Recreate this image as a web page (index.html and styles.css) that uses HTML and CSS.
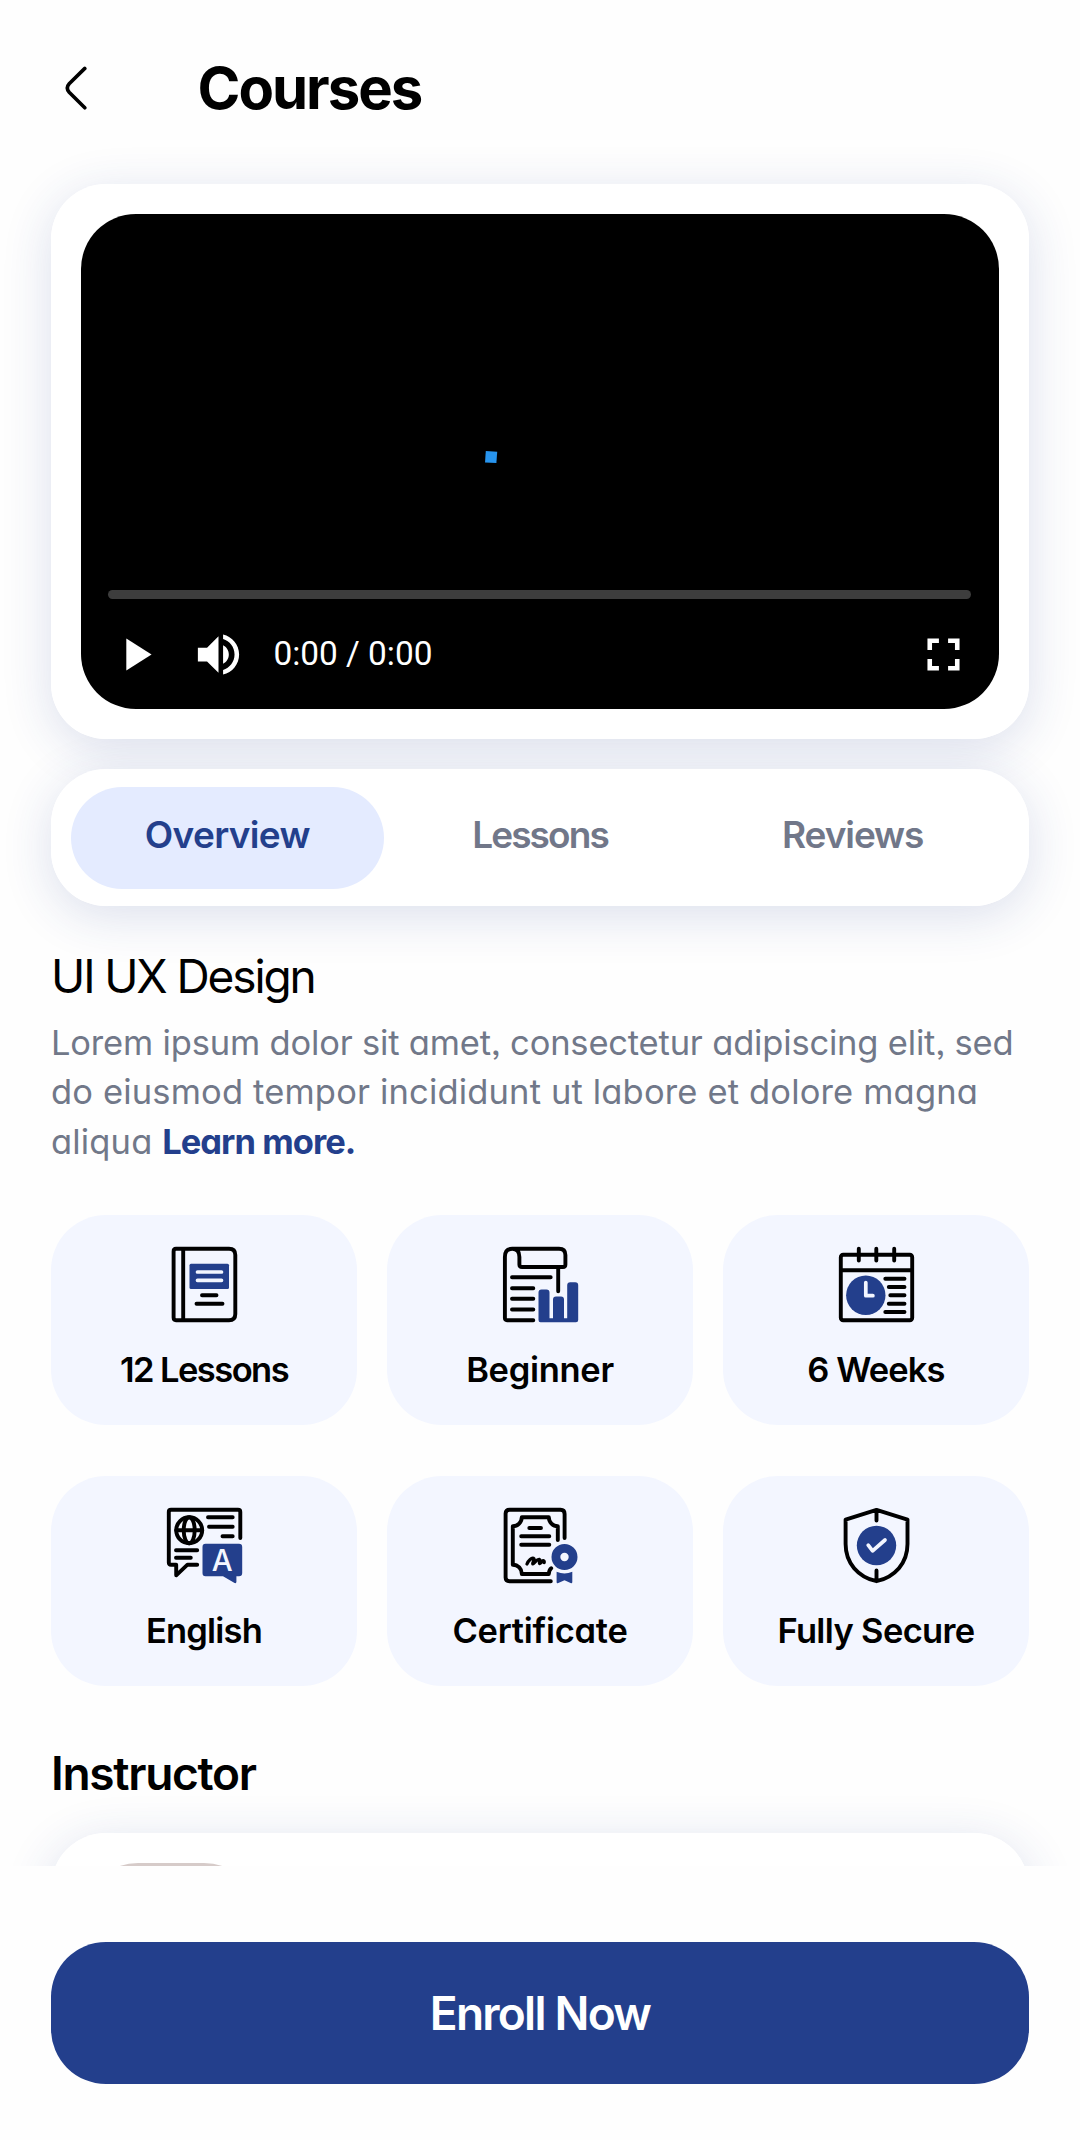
FILE: index.html
```html
<!DOCTYPE html>
<html lang="en">
<head>
<meta charset="utf-8">
<title>Courses</title>
<link rel="stylesheet" href="styles.css">
</head>
<body>
<div class="screen">
  <main class="content">
    <header class="header">
      <svg class="back" viewBox="0 0 24 44" width="24" height="44"><path d="M20.8 2.4 5.2 17.8Q1.4 22 5.2 26.2L20.8 41.8"/></svg>
      <h1 class="page-title">Courses</h1>
    </header>

    <section class="card player-card">
      <div class="player">
        <svg class="spinner" viewBox="0 0 14 14" width="14" height="14"><path d="M1.8 1 13.2 1.7 12.4 13 1 12.4Z"/></svg>
        <div class="track"></div>
        <div class="controls">
          <svg class="control" viewBox="0 0 24 24"><path d="M8 5v14l11-7z"/></svg>
          <svg class="control" viewBox="0 0 24 24"><path d="M3 9v6h4l5 5V4L7 9H3zm13.5 3c0-1.77-1.02-3.29-2.5-4.03v8.05c1.48-.73 2.5-2.25 2.5-4.02zM14 3.23v2.06c2.89.86 5 3.54 5 6.71s-2.11 5.85-5 6.71v2.06c4.01-.91 7-4.49 7-8.77s-2.99-7.86-7-8.77z"/></svg>
          <span class="time">0:00 / 0:00</span>
          <svg class="control fullscreen" viewBox="0 0 24 24"><path d="M7 14H5v5h5v-2H7v-3zm-2-4h2V7h3V5H5v5zm12 7h-3v2h5v-5h-2v3zM14 5v2h3v3h2V5h-5z"/></svg>
        </div>
      </div>
    </section>

    <nav class="card tabs">
      <a class="tab tab-overview active">Overview</a>
      <a class="tab tab-lessons">Lessons</a>
      <a class="tab tab-reviews">Reviews</a>
    </nav>

    <h2 class="course-title">UI UX Design</h2>
    <p class="description"><span class="line-tight">Lorem ipsum dolor sit amet, consectetur adipiscing elit, sed</span><br><span class="line-loose">do eiusmod tempor incididunt ut labore et dolore magna</span><br><span class="line-loose">aliqua</span> <a class="more">Learn more.</a></p>

    <section class="facts">
      <div class="fact">
        <svg class="icon" viewBox="0 0 75 75">
          <path class="ink" d="M9 1.8H62Q68.3 1.8 68.3 8V67Q68.3 73.2 62 73.2H9Q6.6 73.2 6.6 70.6V4.4Q6.6 1.8 9 1.8ZM16.2 2V73M35 48.3H49.5M29.5 56.7H55.5"/>
          <rect class="accent" x="22.5" y="16.7" width="39.5" height="25.4" rx="1.5"/>
          <path class="light" d="M30.5 25H54.5M30.5 33.3H54.5"/>
        </svg>
        <span class="label-lessons">12 Lessons</span>
      </div>
      <div class="fact">
        <svg class="icon" viewBox="0 0 75 75">
          <path class="ink" d="M30.3 73.2H4Q1.9 73.2 1.9 71V10Q1.9 1.8 9.2 1.8H56Q62.4 1.8 62.4 8V17.5Q62.4 20 60 20H19Q16.4 20 16.4 17.5V10Q16.4 1.8 9.2 1.8M55.2 20V44.3M9 30.3H47.7M9 41.2H30.3M9 51.8H30.3M9 62.5H30.3"/>
          <path class="accent" d="M35.5 45.5Q35.5 42.5 38.5 42.5H43.5Q46.5 42.5 46.5 45.5V71.3H50V52.5Q50 49.5 53 49.5H58Q61 49.5 61 52.5V71.3H64.2V38.2Q64.2 35.2 67.2 35.2H72.2Q75.2 35.2 75.2 38.2V73Q75.2 75.3 73 75.3H37.5Q35.5 75.3 35.5 73Z"/>
        </svg>
        <span class="label-level">Beginner</span>
      </div>
      <div class="fact">
        <svg class="icon" viewBox="0 0 75 75">
          <rect class="ink" x="1.8" y="7.8" width="71.4" height="65.4" rx="2.4"/>
          <path class="ink" d="M2 23.3H73M19.8 1.8V13.6M37.3 1.8V13.6M55.2 1.8V13.6M46.3 31.7H65.5M49.8 40H65.5M51.3 48.3H65.5M49.8 56.7H65.5M46.3 65H65.5"/>
          <circle class="accent" cx="26.8" cy="48.3" r="19.7"/>
          <path class="light" d="M26.8 35.6V48.7H33.9"/>
        </svg>
        <span class="label-duration">6 Weeks</span>
      </div>
      <div class="fact">
        <svg class="icon" viewBox="0 0 75 75">
          <path class="ink" d="M73.3 30V4Q73.3 1.8 71 1.8H4Q1.8 1.8 1.8 4V54.5Q1.8 56.7 4 56.7H9.2V67.3L20.5 56.7H30.2M41 9.3H65.7M42 18.7H65.7M55.5 28.3H65.7M9 42.3H30.2M9 49.7H23.8M9.2 22.3H35.2"/>
          <circle class="ink" cx="22.2" cy="22.3" r="13"/>
          <ellipse class="ink" cx="22.2" cy="22.3" rx="5.5" ry="13"/>
          <path class="accent" d="M38.5 35.7H72Q75.2 35.7 75.2 39V65Q75.2 68.2 72 68.2H69.4V74Q69.2 75.6 67.6 75L56 68.2H38.5Q35.5 68.2 35.5 65V39Q35.5 35.7 38.5 35.7Z"/>
          <text class="letter" x="55.3" y="63.4">A</text>
        </svg>
        <span class="label-language">English</span>
      </div>
      <div class="fact">
        <svg class="icon" viewBox="0 0 75 75">
          <path class="ink" d="M61.6 30V6Q61.6 1.8 57.5 1.8H6.5Q2.6 1.8 2.6 5.5V69.5Q2.6 73.2 6.5 73.2H47.8M54.8 32V18.3A9 9 0 0 1 45.8 9.3H18.8A9 9 0 0 1 9.8 18.3V56.7A9 9 0 0 1 18.8 66H45.8Q46 62 48.2 60.2M26.3 20H38M18.2 28.3H46.3M18.2 36.7H46.3"/>
          <path class="ink signature" d="M24 56C25.5 52 28.6 49.6 30.6 50.4C32.4 51.4 29.4 54 29.8 55.8C31.6 55.4 33.8 50.8 36.4 51.4C38.2 52.2 35.6 54.2 36.6 55.6C38.2 55.4 38.8 53 40.2 52.6Q41.4 52.8 41.2 54.6"/>
          <path class="accent" fill-rule="evenodd" d="M61.5 36A13 13 0 1 1 61.5 62A13 13 0 1 1 61.5 36ZM61.5 44.8A4.2 4.2 0 1 0 61.5 53.2A4.2 4.2 0 1 0 61.5 44.8ZM53.6 63.8Q61.5 67.4 69.3 63.8V74.2Q69 75.8 67.6 75L61.5 72.2L55.3 75Q53.8 75.8 53.6 74.2Z"/>
        </svg>
        <span class="label-certificate">Certificate</span>
      </div>
      <div class="fact">
        <svg class="icon" viewBox="0 0 75 75">
          <path class="ink" d="M37.5 1.9L68.5 11.6V36C68.5 55 56 69 37.5 73.2C19 69 6.6 55 6.6 36V11.6ZM37.5 2V12.6M37.5 62.5V73"/>
          <circle class="accent" cx="37.5" cy="37.5" r="19.7"/>
          <path class="light" d="M29.2 37.2L33.6 42.8L46 32"/>
        </svg>
        <span class="label-secure">Fully Secure</span>
      </div>
    </section>

    <h2 class="section-title">Instructor</h2>
    <section class="card instructor"><div class="avatar"></div></section>
  </main>

  <footer class="footer"><button class="enroll">Enroll Now</button></footer>
</div>
</body>
</html>
```
FILE: styles.css
```css
* { box-sizing: border-box; }
body {
  margin: 0;
  background: #fefefe;
  color: #000;
  font-family: Inter, "Liberation Sans", sans-serif;
  font-feature-settings: "cv11", "ss03";
}
h1, h2, p { margin: 0; }
.screen {
  width: 1080px;
  height: 2140px;
  display: flex;
  flex-direction: column;
  overflow: hidden;
}
.content {
  height: 1865.5px;
  flex: none;
  padding: 0 51px;
  overflow: hidden;
  isolation: isolate;
}
.header {
  height: 176px;
  margin-bottom: 8.3px;
  padding-left: 13px;
  display: flex;
  align-items: center;
  gap: 109.5px;
}
.back { fill: none; stroke: #000; stroke-width: 3.6; stroke-linecap: round; }
.page-title { font-size: 58px; font-weight: 700; line-height: 72px; letter-spacing: -2px; }

.card { position: relative; background: #fff; border-radius: 55px; }
.card::before {
  content: "";
  position: absolute;
  inset: 0;
  z-index: -1;
  border-radius: inherit;
  box-shadow: 0 10px 50px rgba(35, 63, 140, .16);
}
.player-card { padding: 30px; }
.player {
  position: relative;
  height: 494.5px;
  padding: 0 28px 27px 27px;
  display: flex;
  flex-direction: column;
  justify-content: flex-end;
  gap: 28px;
  background: #000;
  border-radius: 55px;
}
.spinner { position: absolute; left: 402.5px; top: 236px; fill: #2794ee; }
.track { height: 9px; border-radius: 5px; background: #3d3d3d; }
.controls { display: flex; align-items: center; gap: 27.7px; height: 55px; }
.control { width: 55px; height: 55px; fill: #fff; }
.time { color: #fff; font: 400 33.4px/40px Roboto, sans-serif; }
.fullscreen { margin-left: auto; }

.tabs { margin-top: 30.4px; padding: 17.5px 20px; display: flex; height: 137px; }
.tab {
  flex: 1;
  display: flex;
  justify-content: center;
  border-radius: 51px;
  color: #717789;
  font-size: 37px;
  font-weight: 600;
  line-height: 96px;
}
.active { background: #e4ebff; color: #233f8c; }
.tab-overview { letter-spacing: -.65px; }
.tab-lessons { letter-spacing: -1.9px; }
.tab-reviews { letter-spacing: -1.1px; }

.course-title { margin-top: 41.5px; font-size: 46px; font-weight: 400; line-height: 56px; letter-spacing: -2.1px; }
.description { margin-top: 14px; color: #717889; font-size: 34.5px; line-height: 49.5px; white-space: nowrap; }
.line-tight { letter-spacing: -.18px; }
.line-loose { letter-spacing: .16px; }
.more { color: #233f8c; font-weight: 700; letter-spacing: -.95px; }

.facts { margin-top: 48.6px; display: grid; grid-template-columns: repeat(3, 1fr); gap: 50.5px 30px; }
.fact {
  height: 210.5px;
  padding-top: 32.3px;
  display: flex;
  flex-direction: column;
  align-items: center;
  gap: 26px;
  border-radius: 55px;
  background: #f3f6ff;
  font-size: 34.5px;
  font-weight: 600;
  line-height: 44px;
}
.icon { width: 75px; height: 75px; overflow: visible; }
.ink { fill: none; stroke: #000; stroke-width: 3.9; stroke-linecap: round; stroke-linejoin: round; }
.signature { stroke-width: 3.3; }
.light { fill: none; stroke: #f3f6ff; stroke-width: 3.7; stroke-linecap: round; stroke-linejoin: round; }
.accent { fill: #233f8c; }
.letter { fill: #f3f6ff; font-size: 29.5px; font-weight: 500; text-anchor: middle; }
.label-lessons { letter-spacing: -1.55px; }
.label-level { letter-spacing: -.3px; }
.label-duration { letter-spacing: -.9px; }
.label-language { letter-spacing: -.8px; }
.label-certificate { letter-spacing: -.25px; }
.label-secure { letter-spacing: -.65px; }

.section-title { margin-top: 58.3px; font-size: 46px; font-weight: 600; line-height: 56px; letter-spacing: -1.3px; }
.instructor { margin-top: 32.4px; height: 240px; padding: 30.3px 30px; }
.avatar { width: 180px; height: 180px; border-radius: 57px; background: #d6cbc9; }

.footer { flex: 1; padding: 76px 51px 0; background: #fefefe; }
.enroll {
  width: 100%;
  height: 142.3px;
  border: 0;
  border-radius: 55px;
  background: #233f8c;
  color: #fff;
  font: 600 46px/56px Inter, "Liberation Sans", sans-serif;
  letter-spacing: -1.75px;
}
```
